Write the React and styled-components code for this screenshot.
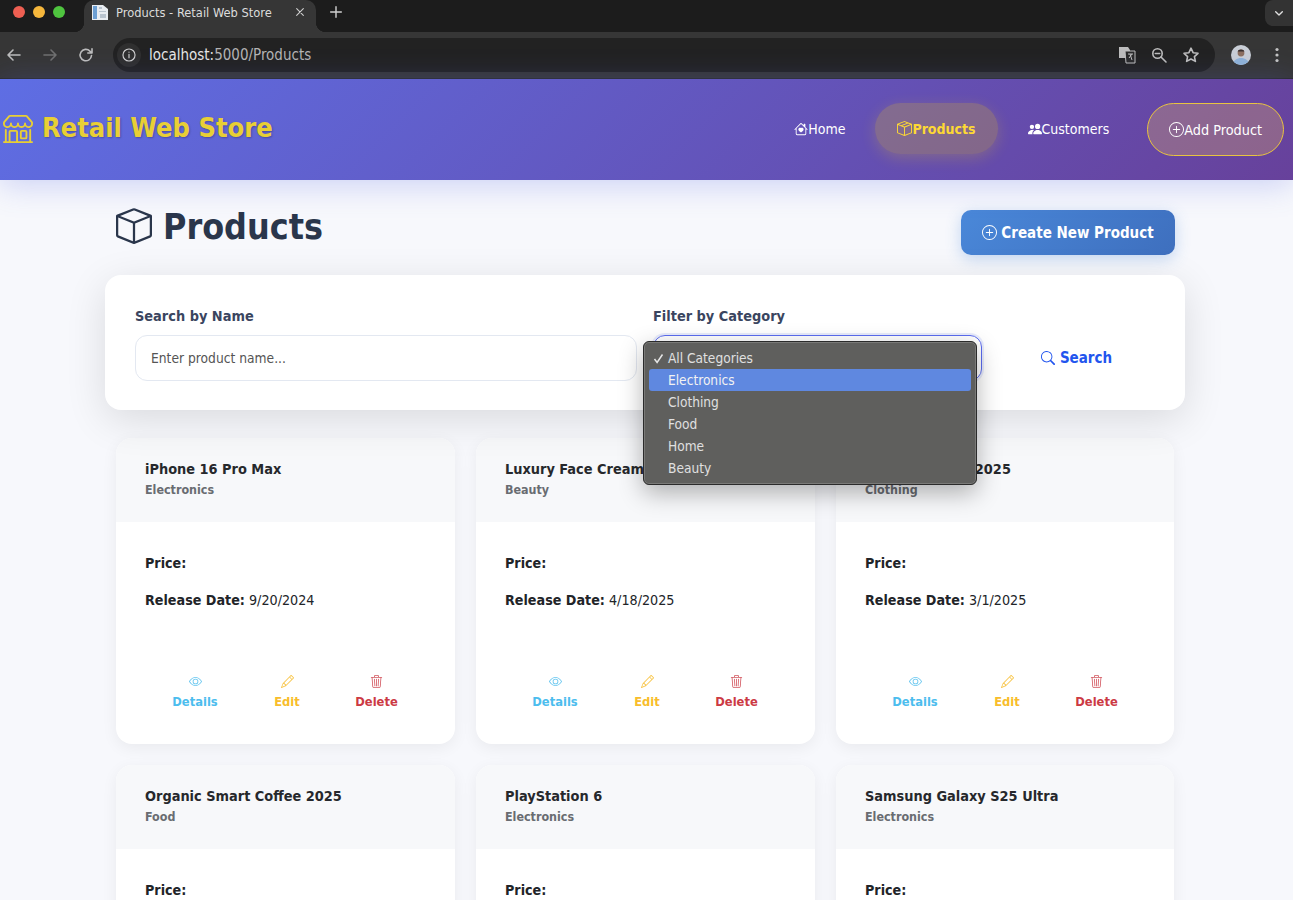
import React from 'react';
import styled, { createGlobalStyle } from 'styled-components';
import {
  BsShop,
  BsHouseHeart,
  BsBox,
  BsBoxSeam,
  BsPeopleFill,
  BsPlusCircle,
  BsSearch,
  BsEye,
  BsPencil,
  BsTrash3,
} from 'react-icons/bs';

const GlobalStyle = createGlobalStyle`
  html, body {
    margin: 0;
    height: 900px;
    overflow: hidden;
    background: #f7f8fc;
  }

  body, input, button {
    font-family: "DejaVu Sans Condensed", "DejaVu Sans", sans-serif;
    font-stretch: condensed;
  }

  * {
    box-sizing: border-box;
  }
`;

const TabStrip = styled.div`
  height: 32px;
  background: #1c1c1c;
  display: flex;
  align-items: flex-start;
`;

const TrafficLights = styled.div`
  display: flex;
  gap: 8px;
  padding: 6px 0 0 13px;
  width: 84px;
`;

const TrafficLight = styled.span`
  width: 12px;
  height: 12px;
  border-radius: 50%;
  background: ${(p) => p.$color};
`;

const Tab = styled.div`
  position: relative;
  width: 232px;
  height: 32px;
  background: #363636;
  border-radius: 10px 10px 0 0;
  display: flex;
  align-items: center;
  padding: 0 10px 8px 8px;
  color: #dcdcdc;
  font-size: 12.75px;

  &::before,
  &::after {
    content: '';
    position: absolute;
    bottom: 0;
    width: 10px;
    height: 10px;
  }

  &::before {
    left: -10px;
    background: radial-gradient(circle at 0 0, transparent 10px, #363636 10.5px);
  }

  &::after {
    right: -10px;
    background: radial-gradient(circle at 100% 0, transparent 10px, #363636 10.5px);
  }
`;

const TabTitle = styled.span`
  flex: 1;
  margin-left: 8px;
`;

const NewTab = styled.div`
  margin: 4px 0 0 12px;
  display: flex;
`;

const TabListButton = styled.div`
  margin-left: auto;
  width: 28px;
  height: 26px;
  background: #333;
  border-radius: 8px 0 0 8px;
  display: flex;
  align-items: center;
  justify-content: center;
`;

const Toolbar = styled.div`
  height: 47px;
  background: #363636;
  border-bottom: 1px solid #2a2a2a;
  display: flex;
  align-items: center;
  padding: 0 0 1px 5px;
`;

const ToolButton = styled.div`
  width: 18px;
  height: 18px;
  margin-right: ${(p) => p.$gap || 0}px;
  display: flex;
`;

const Omnibox = styled.div`
  flex: 0 0 1102px;
  height: 34px;
  margin: 0 16px 0 0;
  background: #222;
  border-radius: 17px;
  display: flex;
  align-items: center;
  padding: 0 15px 0 4px;
`;

const SiteInfo = styled.div`
  width: 24px;
  height: 24px;
  border-radius: 50%;
  background: #2f2f2f;
  display: flex;
  align-items: center;
  justify-content: center;
`;

const Url = styled.div`
  flex: 1;
  margin-left: 8px;
  font-size: 15px;
  color: #b4b4b4;

  b {
    font-weight: 400;
    color: #e6e6e6;
  }
`;

const OmniActions = styled.div`
  display: flex;
  align-items: center;
  gap: 14px;
`;

const Avatar = styled.div`
  width: 20px;
  height: 20px;
  border-radius: 50%;
  overflow: hidden;
  margin-right: 24px;
  display: flex;
`;

const Navbar = styled.nav`
  height: 101px;
  background: linear-gradient(135deg, #5e6ee4 0%, #67419b 100%);
  box-shadow: 0 4px 30px rgba(94, 110, 228, 0.3);
  display: flex;
  align-items: center;
  justify-content: space-between;
  padding: 0 9px 3px 3px;
  position: relative;
`;

const Brand = styled.div`
  display: flex;
  align-items: center;
  gap: 9px;
  color: #e8cf35;
  font-size: 27px;
  font-weight: 700;
  padding-bottom: 1px;
  text-shadow: 1px 1px 2px rgba(0, 0, 0, 0.25);
`;

const NavLinks = styled.div`
  display: flex;
  align-items: center;
  gap: 8px;
`;

const NavLink = styled.a`
  height: 51px;
  display: flex;
  align-items: center;
  padding: 1px 22px 0;
  border-radius: 26px;
  font-size: 14px;
  color: ${(p) => (p.$active ? '#fdd835' : '#ffffff')};
  font-weight: ${(p) => (p.$active ? 700 : 400)};
  background: ${(p) => (p.$active ? 'rgba(255, 215, 0, 0.2)' : 'transparent')};
  box-shadow: ${(p) => (p.$active ? '0 4px 15px rgba(255, 215, 0, 0.2)' : 'none')};
`;

const AddProduct = styled.a`
  height: 53px;
  margin: 2px 0 0 8px;
  display: flex;
  align-items: center;
  padding: 1px 21px 0;
  border: 1.5px solid #e8c440;
  border-radius: 27px;
  background: rgba(255, 200, 90, 0.25);
  color: #fff;
  font-size: 14.3px;
`;

const Main = styled.main`
  width: 1080px;
  margin-left: 105px;
  padding-top: 30px;
`;

const PageHeader = styled.div`
  display: flex;
  align-items: flex-start;
  justify-content: space-between;
  padding: 0 10px 0 11px;
  margin-bottom: 20px;
`;

const PageTitle = styled.h1`
  margin: -2px 0 0;
  display: flex;
  align-items: center;
  gap: 11px;
  color: #2a364b;
  font-size: 35.5px;
  font-weight: 700;
  line-height: 35px;
`;

const CreateButton = styled.button`
  width: 214px;
  height: 45px;
  border: none;
  border-radius: 10px;
  background: linear-gradient(135deg, #4a88d9, #3e6fbe);
  box-shadow: 0 4px 15px rgba(74, 136, 217, 0.3);
  color: #fff;
  font-size: 15px;
  font-weight: 700;
  display: flex;
  align-items: center;
  justify-content: center;
  gap: 4px;
`;

const FilterPanel = styled.div`
  position: relative;
  height: 135px;
  padding: 30px;
  background: #fff;
  border-radius: 16px;
  box-shadow: 0 10px 40px rgba(0, 0, 0, 0.12);
  display: grid;
  grid-template-columns: 502px 329px 157px;
  column-gap: 16px;
  margin-bottom: 28px;
`;

const Field = styled.div`
  display: flex;
  flex-direction: column;
  gap: 8px;
`;

const Label = styled.label`
  font-size: 14.4px;
  font-weight: 700;
  line-height: 21px;
  padding-top: 1px;
  color: #3a4560;
`;

const TextInput = styled.input`
  width: 100%;
  height: 46px;
  padding: 0 15px;
  border: 1px solid #e3e8f1;
  border-radius: 12px;
  background: #fff;
  font-size: 13.7px;
  outline: none;

  &::placeholder {
    color: #555;
    opacity: 1;
  }
`;

const SelectBox = styled.div`
  height: 46px;
  border: 1px solid #5b6cf0;
  border-radius: 12px;
  box-shadow: 0 0 0 2px rgba(102, 126, 234, 0.15);
`;

const SearchButton = styled.button`
  height: 46px;
  align-self: end;
  border: none;
  background: transparent;
  color: #2255ee;
  font-size: 15px;
  font-weight: 700;
  display: flex;
  align-items: center;
  justify-content: center;
  gap: 5px;
`;

const DropdownMenu = styled.div`
  position: absolute;
  left: 538px;
  top: 66px;
  width: 334px;
  height: 144px;
  padding: 5px 5px;
  background: #5f5f5d;
  border: 1px solid #2b2b2b;
  border-radius: 6px;
  box-shadow: inset 0 0 0 1px #7a7a78, 0 8px 24px rgba(0, 0, 0, 0.3);
  z-index: 5;
`;

const DropdownItem = styled.div`
  position: relative;
  height: 22px;
  padding-left: 19px;
  border-radius: 3px;
  font-size: 13.6px;
  line-height: 22px;
  color: ${(p) => (p.$highlighted ? '#f2f2f2' : '#e0e0e0')};
  background: ${(p) => (p.$highlighted ? '#5f88e0' : 'transparent')};
`;

const CheckMark = styled.svg`
  position: absolute;
  left: 4px;
  top: 6px;
`;

const CardGrid = styled.div`
  display: grid;
  grid-template-columns: 339px 339px 338px;
  gap: 21px;
  padding: 0 11px;
`;

const Card = styled.article`
  height: 306px;
  background: #fff;
  border-radius: 16px;
  box-shadow: 0 4px 16px rgba(0, 0, 0, 0.06);
  overflow: hidden;
  display: flex;
  flex-direction: column;
`;

const CardHeader = styled.header`
  height: 84px;
  padding: 21px 29px 0;
  background: #f7f8fa;
`;

const CardTitle = styled.h2`
  margin: 0;
  font-size: 14.4px;
  font-weight: 700;
  line-height: 20px;
  color: #26282c;
`;

const CardCategory = styled.div`
  font-size: 12.4px;
  font-weight: 700;
  line-height: 20px;
  padding-top: 1px;
  color: #696c71;
`;

const CardBody = styled.div`
  flex: 1;
  padding: 31px 29px 33px;
  display: flex;
  flex-direction: column;
`;

const Detail = styled.p`
  margin: 0 0 17px;
  font-size: 14.2px;
  line-height: 20px;
  color: #212428;

  strong {
    font-weight: 700;
  }
`;

const CardActions = styled.div`
  display: grid;
  grid-template-columns: 100px 84px 95px;
  margin-top: auto;
`;

const ActionLink = styled.a`
  display: flex;
  flex-direction: column;
  align-items: center;
  gap: 5px;
  font-size: 12.8px;
  font-weight: 700;
  line-height: 18px;
  color: ${(p) => p.$color};

  svg {
    opacity: 0.85;
  }
`;

const products = [
  { name: 'iPhone 16 Pro Max', category: 'Electronics', date: '9/20/2024' },
  { name: 'Luxury Face Cream 2025', category: 'Beauty', date: '4/18/2025' },
  { name: 'Premium Shirt 2025', category: 'Clothing', date: '3/1/2025' },
  { name: 'Organic Smart Coffee 2025', category: 'Food', date: '1/12/2025' },
  { name: 'PlayStation 6', category: 'Electronics', date: '11/5/2025' },
  { name: 'Samsung Galaxy S25 Ultra', category: 'Electronics', date: '1/22/2025' },
];

const categories = ['All Categories', 'Electronics', 'Clothing', 'Food', 'Home', 'Beauty'];

const Stroke = ({ size = 18, color = '#bdbdbd', width = 1.6, children }) => (
  <svg width={size} height={size} viewBox="0 0 18 18" fill="none" stroke={color} strokeWidth={width} strokeLinecap="round" strokeLinejoin="round">
    {children}
  </svg>
);

const BrowserChrome = () => (
  <>
    <TabStrip>
      <TrafficLights>
        <TrafficLight $color="#ee5f52" />
        <TrafficLight $color="#f6b73c" />
        <TrafficLight $color="#4fc43f" />
      </TrafficLights>
      <Tab>
        <svg width="16" height="16" viewBox="0 0 16 16">
          <path d="M0 1h11l5 4v11H0z" fill="#e9edf2" />
          <path d="M1 2h4v13H1z" fill="#6d9fd3" />
          <path d="M7 3h3v2H7zM7 7h7v1H7zM8 10h6v4H8z" fill="#b9c4cf" />
        </svg>
        <TabTitle>Products - Retail Web Store</TabTitle>
        <Stroke size={12}>
          <path d="M4 4l10 10M14 4L4 14" stroke="#d0d0d0" />
        </Stroke>
      </Tab>
      <NewTab>
        <Stroke size={16} color="#cfcfcf">
          <path d="M9 3v12M3 9h12" />
        </Stroke>
      </NewTab>
      <TabListButton>
        <Stroke size={12} color="#e0e0e0" width={2}>
          <path d="M4 7l5 5 5-5" />
        </Stroke>
      </TabListButton>
    </TabStrip>
    <Toolbar>
      <ToolButton $gap={18}>
        <Stroke><path d="M15 9H3M8 4L3 9l5 5" /></Stroke>
      </ToolButton>
      <ToolButton $gap={18}>
        <Stroke color="#707070"><path d="M3 9h12M10 4l5 5-5 5" /></Stroke>
      </ToolButton>
      <ToolButton $gap={18}>
        <Stroke><path d="M14.5 9.5a5.7 5.7 0 1 1-1.6-4.4L15 7M15 2.8V7h-4.2" /></Stroke>
      </ToolButton>
      <Omnibox>
        <SiteInfo>
          <Stroke size={16} color="#d0d0d0" width={1.3}>
            <circle cx="9" cy="9" r="6.8" />
            <path d="M9 8.2v4M9 5.6v.2" />
          </Stroke>
        </SiteInfo>
        <Url><b>localhost:</b>5000/Products</Url>
        <OmniActions>
          <svg width="18" height="18" viewBox="0 0 18 18">
            <path d="M1 1h9l2 3v8H1z" fill="#bdbdbd" />
            <path d="M7 5h10v12H8z" fill="#2b2b2b" stroke="#bdbdbd" />
            <path d="M10 8h5M12 8l2 6M14 8l-3 4" stroke="#bdbdbd" fill="none" />
          </svg>
          <Stroke><circle cx="7.5" cy="7.5" r="4.7" /><path d="M11 11l5 5M5.3 7.5h4.4" /></Stroke>
          <Stroke><path d="M9 2.2l2.1 4.5 4.9.6-3.6 3.3 1 4.8L9 13l-4.4 2.4 1-4.8L2 7.3l4.9-.6z" /></Stroke>
        </OmniActions>
      </Omnibox>
      <Avatar>
        <svg width="20" height="20" viewBox="0 0 20 20">
          <rect width="20" height="20" fill="#c9ced6" />
          <path d="M2 20c0-5 4-7 8-7s8 2 8 7z" fill="#8fb2d8" />
          <circle cx="10" cy="8" r="3.4" fill="#8d6f60" />
          <path d="M6.6 6.5C7 3.8 13 3.8 13.4 6.5z" fill="#3b3230" />
        </svg>
      </Avatar>
      <svg width="4" height="16" viewBox="0 0 4 16">
        <circle cx="2" cy="2.5" r="1.6" fill="#c4c4c4" />
        <circle cx="2" cy="8" r="1.6" fill="#c4c4c4" />
        <circle cx="2" cy="13.5" r="1.6" fill="#c4c4c4" />
      </svg>
    </Toolbar>
  </>
);

const ProductCard = ({ product }) => (
  <Card>
    <CardHeader>
      <CardTitle>{product.name}</CardTitle>
      <CardCategory>{product.category}</CardCategory>
    </CardHeader>
    <CardBody>
      <Detail><strong>Price:</strong></Detail>
      <Detail><strong>Release Date:</strong> {product.date}</Detail>
      <CardActions>
        <ActionLink $color="#4cbdee"><BsEye size={13} />Details</ActionLink>
        <ActionLink $color="#f8bd2c"><BsPencil size={13} />Edit</ActionLink>
        <ActionLink $color="#cc3a44"><BsTrash3 size={13} />Delete</ActionLink>
      </CardActions>
    </CardBody>
  </Card>
);

const App = () => (
  <>
    <GlobalStyle />
    <BrowserChrome />
    <Navbar>
      <Brand><BsShop size={30} />Retail Web Store</Brand>
      <NavLinks>
        <NavLink><BsHouseHeart size={14} />Home</NavLink>
        <NavLink $active><BsBoxSeam size={15} />Products</NavLink>
        <NavLink><BsPeopleFill size={14} />Customers</NavLink>
        <AddProduct><BsPlusCircle size={15} />Add Product</AddProduct>
      </NavLinks>
    </Navbar>
    <Main>
      <PageHeader>
        <PageTitle><BsBox size={36} />Products</PageTitle>
        <CreateButton><BsPlusCircle size={15} />Create New Product</CreateButton>
      </PageHeader>
      <FilterPanel>
        <Field>
          <Label>Search by Name</Label>
          <TextInput placeholder="Enter product name..." />
        </Field>
        <Field>
          <Label>Filter by Category</Label>
          <SelectBox />
        </Field>
        <SearchButton><BsSearch size={14} />Search</SearchButton>
        <DropdownMenu>
          {categories.map((category, index) => (
            <DropdownItem key={category} $highlighted={index === 1}>
              {index === 0 && (
                <CheckMark width="11" height="11" viewBox="0 0 11 11" fill="none" stroke="#e6e6e6" strokeWidth="1.5">
                  <path d="M1.5 6l2.6 3.5L9.5 1.5" />
                </CheckMark>
              )}
              {category}
            </DropdownItem>
          ))}
        </DropdownMenu>
      </FilterPanel>
      <CardGrid>
        {products.map((product) => (
          <ProductCard key={product.name} product={product} />
        ))}
      </CardGrid>
    </Main>
  </>
);

export default App;
